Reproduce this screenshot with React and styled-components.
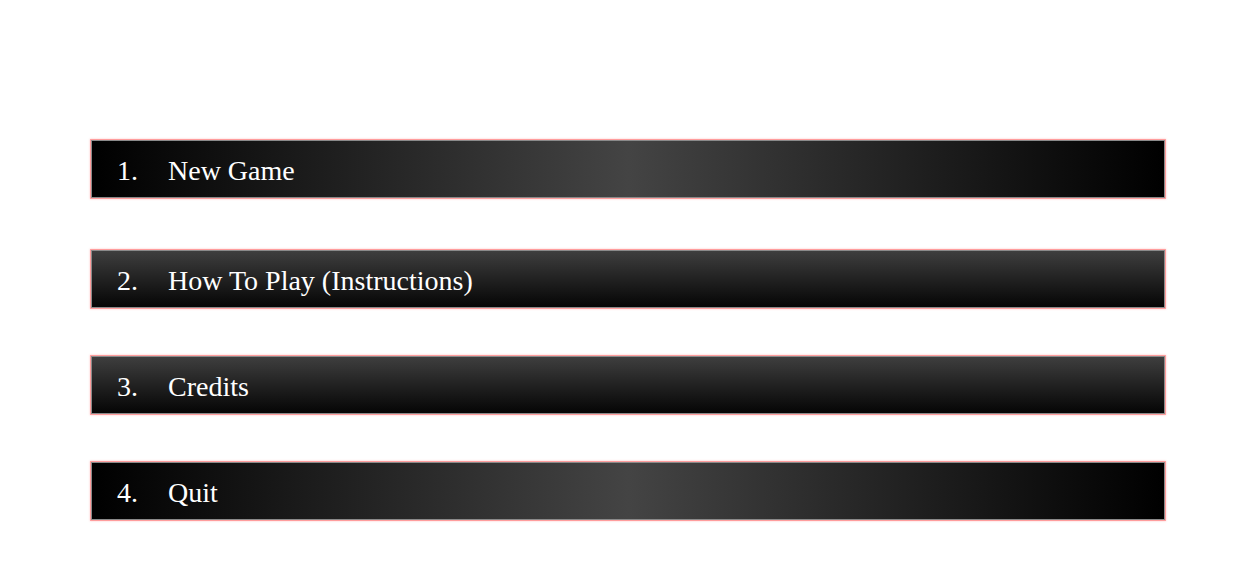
import React from 'react';
import styled, { createGlobalStyle, css } from 'styled-components';

const GlobalStyle = createGlobalStyle`
  html, body {
    margin: 0;
    padding: 0;
    background: #ffffff;
  }
  body {
    font-family: "Liberation Serif", "Times New Roman", serif;
  }
`;

// Page
const Page = styled.div`
  width: 1235px;
  height: 585px;
  box-sizing: border-box;
  padding: 140px 70px 0 91px;
`;

const MenuList = styled.ol`
  list-style: none;
  margin: 0;
  padding: 0;
  display: flex;
  flex-direction: column;
  gap: 48px;
`;

// Menu row
const MenuItem = styled.li`
  height: 58px;
  box-sizing: border-box;
  display: flex;
  align-items: center;
  padding: 3px 0 0 25px;
  border: 1px solid #8a8a8a;
  box-shadow: 0 0 0 1px rgba(255, 110, 110, 0.55), 0 0 2px 1px rgba(255, 90, 90, 0.35);
  color: #ffffff;
  font-size: 28px;
  cursor: pointer;
  background: linear-gradient(to right, #000000 0%, #444444 50%, #000000 100%);

  &:first-child {
    margin-bottom: 4px;
  }

  ${(props) =>
    props.vertical &&
    css`
      background: linear-gradient(to bottom, #3e3e3e 0%, #050505 100%);
    `}
`;

const Number = styled.span`
  width: 51px;
  flex-shrink: 0;
`;

const Label = styled.span`
  white-space: nowrap;
`;

const items = [
  { n: '1.', label: 'New Game', vertical: false },
  { n: '2.', label: 'How To Play (Instructions)', vertical: true },
  { n: '3.', label: 'Credits', vertical: true },
  { n: '4.', label: 'Quit', vertical: false },
];

export default function App() {
  return (
    <>
      <GlobalStyle />
      <Page>
        <MenuList>
          {items.map((item) => (
            <MenuItem key={item.n} vertical={item.vertical}>
              <Number>{item.n}</Number>
              <Label>{item.label}</Label>
            </MenuItem>
          ))}
        </MenuList>
      </Page>
    </>
  );
}
